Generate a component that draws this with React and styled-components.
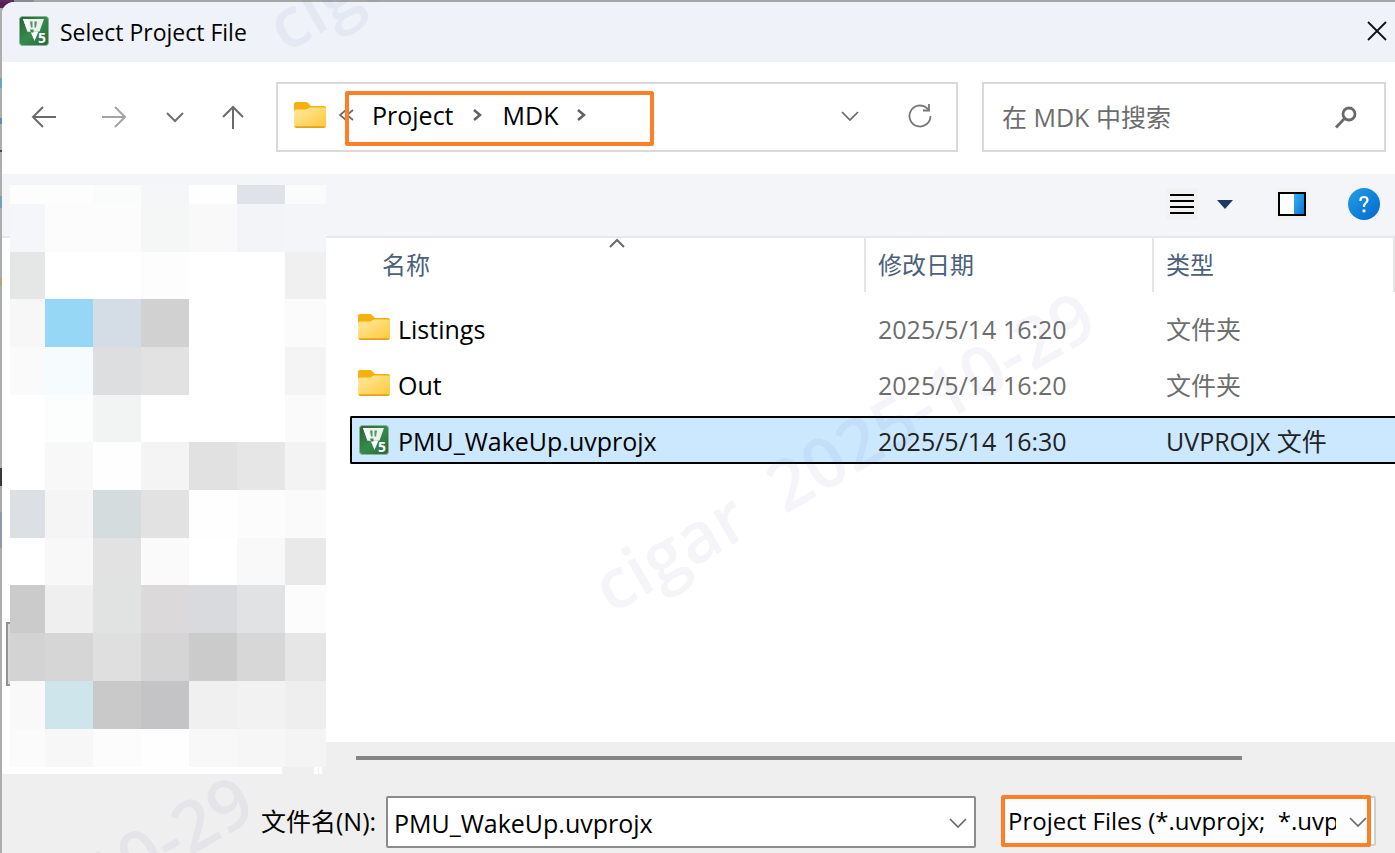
import React from "react";
import styled, { createGlobalStyle } from "styled-components";

const GlobalStyle = createGlobalStyle`
  *, *::before, *::after { box-sizing: border-box; }
  html, body { margin: 0; height: 100%; overflow: hidden; }
  #root { height: 100%; }
  body, button, input, select {
    font-family: "Open Sans", "Noto Sans CJK SC", sans-serif;
    font-size: 25px;
    line-height: 32px;
    color: #000;
  }
  button, input, select { margin: 0; padding: 0; border: 0; background: none; border-radius: 0; outline: 0; }
`;

const Desktop = styled.div`
  position: relative;
  height: 100vh;
  min-height: 640px;
  overflow: hidden;
  padding: 2px 0 0 2px;
  background:
    linear-gradient(90deg, #5b2a5e 0 14px, #8c8a94 14px 34px, #a6a6a6 34px) 0 0 / 100% 2px no-repeat,
    linear-gradient(#55204f 0 8px, #adadad 8px 78px, #6fa3c0 78px 88px, #adadad 88px 118px, #5d8fb4 118px 124px,
      #adadad 124px 150px, #6b3434 150px 152px, #adadad 152px 196px, #74a0ba 196px 208px, #adadad 208px 278px,
      #b7a477 278px 286px, #adadad 286px 468px, #383838 468px 486px, #a9a9a9 486px 512px, #8f98a8 512px 548px,
      #adadad 548px);
`;

const Dialog = styled.main`
  display: flex;
  flex-direction: column;
  height: 100%;
  background: #efefef;
  border-top-left-radius: 12px;
  overflow: hidden;
`;

const TitleBar = styled.header`
  display: flex;
  align-items: center;
  gap: 10px;
  height: 60px;
  flex: none;
  padding: 0 8px 2px 16px;
  background: #eff3f9;
`;

const Title = styled.h1`
  flex: 1;
  margin: 0;
  padding-top: 2px;
  font-size: 23px;
  font-weight: 400;
`;

const IconButton = styled.button`
  display: flex;
  align-items: center;
  justify-content: center;
  flex: none;
  width: ${(p) => p.$w || 32}px;
  height: 32px;
`;

const NavBar = styled.nav`
  display: flex;
  align-items: center;
  height: 112px;
  flex: none;
  padding: 0 9px 2px 7px;
  background: #fff;
`;

const NavButtons = styled.div`
  display: flex;
  align-items: center;
  flex: none;
  margin-right: 11px;
`;

const Field = styled.div`
  display: flex;
  align-items: center;
  height: 70px;
  border: 2px solid #d9d9d9;
  background: #fff;
`;

const AddressBar = styled(Field)`
  flex: 1;
  min-width: 0;
  margin-right: 24px;
  padding: 0 20px 2px 16px;
`;

const SearchBox = styled(Field)`
  flex: none;
  width: 404px;
  padding: 0 22px 0 18px;
`;

const SearchInput = styled.input`
  flex: 1;
  min-width: 0;
  &::placeholder { color: #6d6d6d; opacity: 1; }
`;

const Crumbs = styled.div`
  position: relative;
  display: flex;
  align-items: center;
  flex: 1;
  margin-left: 12px;
  padding-bottom: 2px;
`;

const Overflow = styled.span`
  width: 16px;
  margin-right: 18px;
  color: #6a6a6a;
  display: flex;
`;

const Crumb = styled.button`
  margin-right: 15px;
`;

const CrumbArrow = styled.span`
  display: flex;
  width: 16px;
  margin-right: 18px;
`;

const Highlight = styled.span`
  position: absolute;
  border: 4px solid #ff7f27;
  border-radius: 2px;
  pointer-events: none;
`;

const CrumbHighlight = styled(Highlight)`
  left: 7px;
  top: -8px;
  width: 309px;
  height: 55px;
`;

const FilterHighlight = styled(Highlight)`
  inset: -1px 5px -1px 0;
`;

const Toolbar = styled.div`
  display: flex;
  align-items: center;
  justify-content: flex-end;
  height: 64px;
  flex: none;
  padding: 0 15px 2px 0;
  background: #f4f5f8;
  border-bottom: 2px solid #e7e8ea;
`;

const ViewButton = styled(IconButton)`
  background: ${(p) => (p.$plain ? "none" : "#f2f2f2")};
  margin-left: ${(p) => p.$gap || 0}px;
`;

const Content = styled.div`
  display: flex;
  flex: 1;
  min-height: 0;
`;

const Sidebar = styled.aside`
  position: relative;
  z-index: 1;
  width: 324px;
  flex: none;
  padding-left: 8px;
  background: linear-gradient(90deg, #fff 280px, #efefef 280px 312px, #fff 312px 316px, #efefef 316px 317px, #fff 317px 320px, #efefef 320px);
`;

const SelectedEdge = styled.span`
  position: absolute;
  left: 4px;
  top: 384px;
  width: 4px;
  height: 64px;
  border: 2px solid #949494;
  border-right: 0;
  background: #d9d9d9;
`;

const Mosaic = styled.div`
  display: grid;
  grid-template-columns: 35px repeat(5, 48px) 41px;
  grid-template-rows: 19px 48px 47px 48px 48px 47px 48px 48px 47px 48px 48px 48px 38px;
  margin-top: -53px;
`;

const Tile = styled.span`
  background: ${(p) => p.$color};
`;

const FilePane = styled.section`
  display: flex;
  flex-direction: column;
  flex: 1;
  min-width: 0;
`;

const FileList = styled.div`
  flex: 1;
  min-height: 0;
  padding-left: 24px;
  background: #fff;
  overflow: hidden;
`;

const FileTable = styled.table`
  width: 100%;
  table-layout: fixed;
  border-collapse: separate;
  border-spacing: 0;
`;

const Heading = styled.th`
  position: relative;
  width: ${(p) => p.$w};
  height: 54px;
  padding: 0 0 0 ${(p) => p.$pad}px;
  border-right: 2px solid #e5e5e5;
  color: #4c607a;
  font-size: 24px;
  font-weight: 400;
  text-align: left;
`;

const SortMark = styled.span`
  position: absolute;
  display: flex;
  top: 0;
  left: 20px;
  right: 0;
  justify-content: center;
`;

const Spacer = styled.tr`
  height: ${(p) => p.$h}px;
`;

const Row = styled.tr`
  height: 48px;
  color: ${(p) => (p.$selected ? "#222" : "#6d6d6d")};
  background: ${(p) => (p.$selected ? "#cce8ff" : "none")};
  td {
    border: solid ${(p) => (p.$selected ? "#000" : "transparent")};
    border-width: 2px 0;
  }
  td:first-child { border-left-width: 2px; border-top-left-radius: 2px; border-bottom-left-radius: 2px; }
`;

const Cell = styled.td`
  padding: 1px 0 0 12px;
  white-space: nowrap;
`;

const NameCell = styled(Cell)`
  padding-left: 6px;
  color: #000;
  svg { margin-bottom: 2px; }
`;

const FileName = styled.span`
  display: flex;
  align-items: center;
  gap: 8px;
`;

const ScrollTrack = styled.div`
  height: 32px;
  flex: none;
  padding: 14px 153px 0 30px;
`;

const ScrollThumb = styled.div`
  height: 4px;
  background: #858585;
`;

const Footer = styled.footer`
  display: flex;
  align-items: flex-start;
  height: 79px;
  flex: none;
  padding: 22px 19px 0 259px;
`;

const FileLabel = styled.label`
  flex: none;
  width: 125px;
  padding: 9px 0;
  white-space: nowrap;
`;

const ComboBox = styled.div`
  display: flex;
  align-items: center;
  flex: 1;
  min-width: 0;
  height: 52px;
  margin-right: 25px;
  padding: 2px 0 0 6px;
  border: 2px solid #8b8b8b;
  border-radius: 2px;
  background: #fff;
`;

const FileInput = styled.input`
  flex: 1;
  min-width: 0;
`;

const FilterBox = styled.div`
  position: relative;
  flex: none;
  width: 375px;
`;

const FilterSelect = styled.select`
  appearance: none;
  display: block;
  width: 100%;
  height: 50px;
  padding: 0 38px 0 5px;
  border: 2px solid #d0d0d0;
  border-radius: 2px;
  background: #fdfdfd;
  font-size: 24px;
  white-space: pre;
  overflow: hidden;
  text-overflow: clip;
`;

const FilterArrow = styled.span`
  position: absolute;
  display: flex;
  right: 9px;
  top: 20px;
  pointer-events: none;
`;

const Watermark = styled.span`
  position: absolute;
  z-index: 2;
  left: ${(p) => p.$x}px;
  top: ${(p) => p.$y}px;
  transform: rotate(-30deg);
  transform-origin: 0 100%;
  font-size: 70px;
  line-height: 64px;
  font-weight: 600;
  white-space: pre;
  color: rgba(70, 60, 150, 0.06);
  pointer-events: none;
`;

const KeilIcon = () => (
  <svg width="32" height="32" viewBox="0 0 32 32" aria-hidden="true">
    <defs>
      <linearGradient id="keil" x1="0" y1="0" x2="1" y2="1">
        <stop offset="0" stopColor="#276437" />
        <stop offset=".5" stopColor="#368a4c" />
        <stop offset="1" stopColor="#28663a" />
      </linearGradient>
    </defs>
    <rect x="1.5" y="1.5" width="29" height="29" rx="3" fill="url(#keil)" stroke="#8db398" />
    <path d="M5 4h21l-4.500 12.500h-12z" fill="#e9f2eb" />
    <path d="M5 4h5l3 12.500H9.500z" fill="#fff" />
    <path d="M12 6.500l1 6h1.500v-6zM16.500 6.500v6H18l1-6z" fill="#4f9562" />
    <path d="M12.500 16.500h8l-4 9.500z" fill="#fff" />
    <path d="M12 14.500h3.500v3H13z" fill="#368a4c" />
    <text x="20" y="28" fontSize="14" fontWeight="700" fill="#fff">5</text>
  </svg>
);

const FolderIcon = () => (
  <svg width="32" height="28" viewBox="0 0 32 28" aria-hidden="true">
    <defs>
      <linearGradient id="folder" x1="0" y1="0" x2="1" y2="1">
        <stop offset="0" stopColor="#ffe9a2" />
        <stop offset="1" stopColor="#ffc937" />
      </linearGradient>
    </defs>
    <path d="M0 2a2 2 0 0 1 2-2h10a3 3 0 0 1 2 1l3 3h13a2 2 0 0 1 2 2v6H0z" fill="#f6b10c" />
    <path d="M0 9.500a2 2 0 0 1 2-2h10l4-2h14a2 2 0 0 1 2 2V24a2 2 0 0 1-2 2H2a2 2 0 0 1-2-2z" fill="url(#folder)" />
    <path d="M.5 24.300h31L30 26H2z" fill="#e3a21a" />
  </svg>
);

const Stroke = ({ w, h, d, color = "#6a6a6a", sw = 2 }) => (
  <svg width={w} height={h} viewBox={`0 0 ${w} ${h}`} fill="none" stroke={color} strokeWidth={sw} aria-hidden="true">
    <path d={d} />
  </svg>
);

const Chevron = ({ color, sw = 1.7 }) => <Stroke w={18} h={12} d="M1 2l8 8 8-8" color={color} sw={sw} />;

const mosaic = [
  "fdfdfe fdfdfe fafcfb f4f6f7 fefefe dfe3e9 fafbfb",
  "f4f6f9 fcfcfd fcfcfd f5f7f7 f9f9f9 f2f4f7 f4f5f8",
  "e5e7e6 ffffff ffffff fdfdfd ffffff ffffff f0f0f0",
  "f7f7f7 97d7f6 d4dce6 d1d1d1 ffffff ffffff fbfbfb",
  "fafafa f6fcfe dddedf e2e2e2 ffffff ffffff f4f4f4",
  "ffffff fcfefe f2f4f3 ffffff ffffff ffffff fafafa",
  "ffffff f8f8f8 fefefe f4f4f4 e1e1e1 e6e6e6 f3f3f3",
  "dce0e4 f5f5f5 d5dcde e2e2e2 fefefe fcfcfc fafafa",
  "ffffff f8f8f8 e2e2e2 fafafa ffffff f9f9f9 e9e9e9",
  "cbcbcb efefef e1e3e2 dcd9da d9dadd e1e2e4 fcfcfc",
  "d3d3d3 d6d6d6 dfdfdf d5d5d5 cbcbcb d7d7d7 e6e6e6",
  "f9f9f9 cee5ec c9c9c9 c4c4c6 f0f0f0 f2f2f2 eeeeee",
  "fbfbfb f7f7f7 fcfcfc fefefe f8f8f8 f6f6f6 f4f4f4",
].flatMap((row) => row.split(" "));

const files = [
  { name: "Listings", date: "2025/5/14 16:20", type: "文件夹", folder: true },
  { name: "Out", date: "2025/5/14 16:20", type: "文件夹", folder: true },
  { name: "PMU_WakeUp.uvprojx", date: "2025/5/14 16:30", type: "UVPROJX 文件", selected: true },
];

const watermark = "cigar  2025-10-29";

export default function App() {
  return (
    <Desktop>
      <GlobalStyle />
      <Dialog>
        <TitleBar>
          <KeilIcon />
          <Title>Select Project File</Title>
          <IconButton $w={20} aria-label="Close">
            <Stroke w={20} h={20} d="M1 1l18 18M19 1L1 19" color="#111" sw={1.8} />
          </IconButton>
        </TitleBar>

        <NavBar>
          <NavButtons>
            <IconButton $w={70} aria-label="Back">
              <Stroke w={26} h={22} d="M25 11H2M12 1L2 11l10 10" />
            </IconButton>
            <IconButton $w={70} aria-label="Forward">
              <Stroke w={26} h={22} d="M1 11h23M14 1l10 10-10 10" color="#a3a3a3" />
            </IconButton>
            <IconButton $w={52} aria-label="Recent">
              <Chevron color="#707070" sw={2} />
            </IconButton>
            <IconButton $w={64} aria-label="Up">
              <Stroke w={22} h={24} d="M11 24V2M1 12L11 2l10 10" />
            </IconButton>
          </NavButtons>
          <AddressBar>
            <FolderIcon />
            <Crumbs>
              <Overflow>
                <Stroke w={16} h={14} d="M8 2L2 7l6 5M15 2L9 7l6 5" sw={1.7} />
              </Overflow>
              <Crumb>Project</Crumb>
              <CrumbArrow>
                <Stroke w={16} h={14} d="M5 2l6 5-6 5" color="#606060" sw={2.500} />
              </CrumbArrow>
              <Crumb>MDK</Crumb>
              <CrumbArrow>
                <Stroke w={16} h={14} d="M5 2l6 5-6 5" color="#606060" sw={2.500} />
              </CrumbArrow>
              <CrumbHighlight />
            </Crumbs>
            <IconButton $w={108} aria-label="History">
              <Chevron />
            </IconButton>
            <IconButton aria-label="Refresh">
              <svg width="26" height="26" viewBox="0 0 26 26" fill="none" stroke="#777" strokeWidth="1.800" aria-hidden="true">
                <path d="M23.500 13a10.500 10.500 0 1 1-3.500-7.800l2 1.800" />
                <path d="M22 1v6.500h-6" />
              </svg>
            </IconButton>
          </AddressBar>
          <SearchBox>
            <SearchInput aria-label="Search" placeholder="在 MDK 中搜索" />
            <IconButton aria-label="Start search">
              <svg width="24" height="24" viewBox="0 0 24 24" fill="none" stroke="#6a6a6a" strokeWidth="2.800" aria-hidden="true">
                <circle cx="15" cy="9" r="6" />
                <path d="M10.500 13.500L2 22.500" />
              </svg>
            </IconButton>
          </SearchBox>
        </NavBar>

        <Toolbar>
          <ViewButton aria-label="Details view">
            <Stroke w={24} h={22} d="M0 2h24M0 8h24M0 14h24M0 20h24" color="#000" />
          </ViewButton>
          <ViewButton $plain $w={54} aria-label="More views">
            <svg width="16" height="9" viewBox="0 0 16 9" aria-hidden="true">
              <path d="M0 0h16L8 9z" fill="#1f3864" />
            </svg>
          </ViewButton>
          <ViewButton $gap={24} aria-label="Preview pane">
            <svg width="28" height="24" viewBox="0 0 28 24" aria-hidden="true">
              <defs>
                <linearGradient id="pane" x1="0" y1="0" x2="1" y2="1">
                  <stop offset="0" stopColor="#35b2f0" />
                  <stop offset="1" stopColor="#0a74d6" />
                </linearGradient>
              </defs>
              <rect x="1" y="1" width="26" height="22" fill="#fff" stroke="#000" strokeWidth="2" />
              <rect x="16" y="2" width="10" height="20" fill="url(#pane)" />
            </svg>
          </ViewButton>
          <ViewButton $plain $gap={40} aria-label="Help">
            <svg width="32" height="32" viewBox="0 0 32 32" aria-hidden="true">
              <defs>
                <linearGradient id="help" x1="0" y1="0" x2="1" y2="1">
                  <stop offset="0" stopColor="#249fe6" />
                  <stop offset="1" stopColor="#0268cd" />
                </linearGradient>
              </defs>
              <circle cx="16" cy="16" r="16" fill="url(#help)" />
              <path d="M12.500 13V12c0-2 1.300-3 3.500-3s3.500 1 3.500 3c0 3-3.500 3-3.500 6v1" fill="none" stroke="#fff" strokeWidth="2.200" />
              <rect x="14.600" y="21.500" width="2.800" height="2.800" fill="#fff" />
            </svg>
          </ViewButton>
        </Toolbar>

        <Content>
          <Sidebar>
            <SelectedEdge />
            <Mosaic>
              {mosaic.map((c, i) => (
                <Tile key={i} $color={`#${c}`} />
              ))}
            </Mosaic>
          </Sidebar>
          <FilePane>
            <FileList>
              <FileTable>
                <thead>
                  <tr>
                    <Heading $w="auto" $pad={32}>
                      <SortMark>
                        <Stroke w={18} h={12} d="M2 9l7-7 7 7" color="#6a6a6a" />
                      </SortMark>
                      名称
                    </Heading>
                    <Heading $w="288px" $pad={12}>修改日期</Heading>
                    <Heading $w="241px" $pad={12}>类型</Heading>
                  </tr>
                </thead>
                <tbody>
                  {files.map((f, i) => (
                    <React.Fragment key={f.name}>
                      <Spacer $h={i ? 8 : 12} aria-hidden="true" />
                      <Row $selected={f.selected}>
                        <NameCell>
                          <FileName>
                            {f.folder ? <FolderIcon /> : <KeilIcon />}
                            {f.name}
                          </FileName>
                        </NameCell>
                        <Cell>{f.date}</Cell>
                        <Cell>{f.type}</Cell>
                      </Row>
                    </React.Fragment>
                  ))}
                </tbody>
              </FileTable>
            </FileList>
            <ScrollTrack>
              <ScrollThumb />
            </ScrollTrack>
          </FilePane>
        </Content>

        <Footer>
          <FileLabel htmlFor="file-name">文件名(N):</FileLabel>
          <ComboBox>
            <FileInput id="file-name" defaultValue="PMU_WakeUp.uvprojx" />
            <IconButton aria-label="Recent names">
              <Chevron />
            </IconButton>
          </ComboBox>
          <FilterBox>
            <FilterSelect aria-label="File type">
              <option>{"Project Files (*.uvprojx;\u00a0 *.uvproj)"}</option>
            </FilterSelect>
            <FilterArrow>
              <Chevron />
            </FilterArrow>
            <FilterHighlight />
          </FilterBox>
        </Footer>
      </Dialog>
      <Watermark $x={614} $y={555}>{watermark}</Watermark>
      <Watermark $x={288} $y={-6}>{watermark}</Watermark>
      <Watermark $x={-228} $y={1039}>{watermark}</Watermark>
    </Desktop>
  );
}
